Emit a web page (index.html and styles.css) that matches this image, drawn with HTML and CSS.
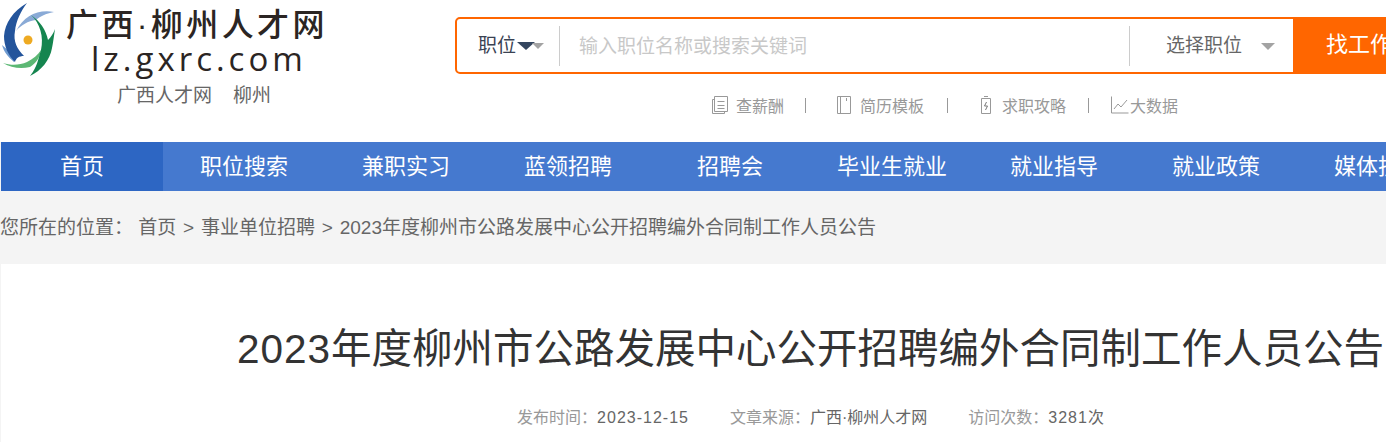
FILE: index.html
```html
<!DOCTYPE html>
<html lang="zh-CN">
<head>
  <meta charset="UTF-8">
  <title>2023年度柳州市公路发展中心公开招聘编外合同制工作人员公告</title>
  <link rel="stylesheet" href="styles.css">
</head>
<body>
  <div class="page">
    <header class="top">
      <div class="logo-box">
        <div class="logo">
          <svg class="logo-mark" width="56" height="76" viewBox="0 0 56 76">
            <path d="M2 44c2 7 6 12 12 17l3-7c-6-3-11-6-15-10z" fill="#6f9bd0"/>
            <path d="M16 30C24 15 38 8 54 11 45 13 41 15 36 19 28 20 21 24 16 30z" fill="#8aaad6"/>
            <path d="M27 2C13 10 5 22 4 35c0 10 4 19 11 26 1-4 4-6 9-6-7-7-11-15-9-25 1-10 6-20 12-28z" fill="#23549b"/>
            <path d="M3 62c9 3 17 2 24-1 6-3 11-7 14-12-1 8-5 13-11 17-9 2-19 1-27-4z" fill="#5cb874"/>
            <path d="M31 14c9 8 13 22 10 35-3 10-4 17-11 26 11-5 20-16 22-28 1-5 2-12 3-19-2 5-4 8-7 11-2-10-8-19-17-25z" fill="#15854f"/>
            <circle cx="28" cy="39" r="4.500" fill="#eeaa22"/>
          </svg>
          <div class="logo-words">
            <div class="logo-cn">广西·柳州人才网</div>
            <div class="logo-en">lz.gxrc.com</div>
          </div>
        </div>
        <div class="city"><span>广西人才网</span><span>柳州</span></div>
      </div>

      <div class="search-box">
        <form class="search">
          <div class="search-type">职位<i class="arrow-dark"></i><i class="arrow-gray arrow-small"></i></div>
          <div class="search-input">输入职位名称或搜索关键词</div>
          <div class="search-pick">选择职位<i class="arrow-gray"></i></div>
          <div class="search-btn">找工作</div>
        </form>
        <div class="tools">
          <a class="tool tool-pay">
            <svg width="18" height="18" viewBox="0 0 18 18" fill="none" stroke="#999"><path d="M3.500 3.500h-2v14h12v-2M3.500 .5h13v15h-13zM6.500 5.500h7M6.500 9.500h7M6.500 12.500h7"/></svg>
            查薪酬
          </a>
          <i class="tool-line"></i>
          <a class="tool tool-cv">
            <svg width="16" height="18" viewBox="0 0 16 18" fill="none" stroke="#999"><path d="M1.500 .5h13v17h-13zM4.500 .5v17M10.500 2v3"/></svg>
            简历模板
          </a>
          <i class="tool-line"></i>
          <a class="tool tool-guide">
            <svg width="12" height="18" viewBox="0 0 12 18" fill="none" stroke="#999"><path d="M1.500 2.500h9v15h-9zM4 .5h4"/><path d="M6.500 6l-2 4h3l-2 4" stroke="#777"/></svg>
            求职攻略
          </a>
          <i class="tool-line"></i>
          <a class="tool tool-data">
            <svg width="18" height="18" viewBox="0 0 18 18" fill="none" stroke="#999"><path d="M.5 .5v16.500h17M3 13l4-5 3 3 6-7"/></svg>
            大数据
          </a>
        </div>
      </div>
    </header>

    <nav class="nav">
      <a class="on">首页</a>
      <a>职位搜索</a>
      <a>兼职实习</a>
      <a>蓝领招聘</a>
      <a>招聘会</a>
      <a>毕业生就业</a>
      <a>就业指导</a>
      <a>就业政策</a>
      <a>媒体技术</a>
    </nav>

    <div class="crumb">
      <span class="crumb-label">您所在的位置：</span>
      <a>首页</a><b>&gt;</b><a>事业单位招聘</a><b>&gt;</b><a>2023年度柳州市公路发展中心公开招聘编外合同制工作人员公告</a>
    </div>

    <section class="article">
      <h1><span class="num">2023</span>年度柳州市公路发展中心公开招聘编外合同制工作人员公告</h1>
      <div class="meta">
        <span><em>发布时间：</em><span class="num">2023-12-15</span></span>
        <span><em>文章来源：</em>广西·柳州人才网</span>
        <span><em>访问次数：</em><span class="num">3281</span>次</span>
      </div>
    </section>
  </div>
</body>
</html>
```

FILE: styles.css
```css
html, body { margin: 0; padding: 0; height: 442px; overflow: hidden; background: #f4f4f4; }
body { font-family: "Liberation Sans", "Noto Sans CJK SC", sans-serif; color: #666; }
.page { width: 1620px; }

.top { display: flex; height: 142px; background: #fff; }
.logo-box { width: 455px; flex: none; }
.logo { display: flex; height: 82px; }
.logo-mark { flex: none; margin-top: 1px; }
.logo-words { margin-left: 10px; color: #2b2523; }
.logo-cn { font-size: 32px; line-height: 36px; font-weight: 500; letter-spacing: 3.400px; margin-top: 7px; white-space: nowrap; }
.logo-en { font-size: 33px; line-height: 32px; letter-spacing: 4px; margin-left: 25px; font-family: "Open Sans", sans-serif; }
.city { font-size: 19px; line-height: 26px; margin: 1px 0 0 117px; display: flex; gap: 21px; }

.search-box { flex: none; width: 1100px; padding-top: 17px; }
.search { display: flex; align-items: center; height: 57px; width: 940px; box-sizing: border-box; border: 2px solid #f60; border-radius: 5px; font-size: 19px; }
.search-type { width: 103px; height: 40px; line-height: 40px; box-sizing: border-box; padding: 1px 0 0 21px; color: #3a4252; border-right: 1px solid #ccc; display: flex; align-items: center; flex: none; }
.search-input { flex: 1; padding-left: 19px; height: 40px; line-height: 41px; color: #c8c8c8; }
.search-pick { width: 164px; height: 40px; line-height: 40px; box-sizing: border-box; padding: 1px 0 0 36px; color: #666; border-left: 1px solid #ccc; display: flex; align-items: center; flex: none; }
.search-btn { width: 102px; height: 57px; line-height: 55px; background: #f60; color: #fff; padding-left: 33px; box-sizing: border-box; margin-right: -2px; font-size: 22px; white-space: nowrap; flex: none; }
.arrow-dark, .arrow-gray { display: inline-block; width: 0; height: 0; border-style: solid; border-color: transparent; border-width: 7px 7px 0; }
.arrow-dark { border-width: 8px 9px 0; border-top-color: #34465f; margin-left: 1px; }
.arrow-gray { border-top-color: #a3a3a3; margin-left: 19px; }
.arrow-gray.arrow-small { border-width: 6px 6px 0; margin-left: -3px; }

.tools { display: flex; align-items: center; height: 30px; margin-top: 16px; padding-left: 256px; font-size: 16px; color: #999; }
.tool { display: flex; align-items: center; white-space: nowrap; }
.tool svg { flex: none; }
.tool-line { width: 1px; height: 15px; background: #999; }
.tool-pay svg { margin-right: 7px; }
.tool-cv svg { margin-right: 8px; }
.tool-guide svg { margin-right: 10px; }
.tool-data svg { margin-right: 1px; }
.tool-pay + .tool-line { margin: 0 30px 0 21px; }
.tool-cv + .tool-line { margin: 0 32px 0 23px; }
.tool-guide + .tool-line { margin: 0 22px 0 22px; }

.nav { display: flex; height: 49px; margin-left: 1px; background: #4579cf; }
.nav a { flex: none; width: 162px; line-height: 49px; text-align: center; color: #fff; font-size: 22px; }
.nav a.on { background: #2d66c3; }

.crumb { height: 73px; line-height: 74px; font-size: 19px; color: #666; white-space: nowrap; }
.crumb b { font-weight: normal; margin: 0 6.800px; }

.article { margin-left: 1px; background: #fff; text-align: center; height: 300px; }
.article h1 { margin: 0; padding-top: 60px; font-size: 40.500px; line-height: 50px; font-weight: normal; color: #333; white-space: nowrap; }
.article h1 .num { letter-spacing: 1px; }
.meta { display: flex; justify-content: center; gap: 41px; margin-top: 32px; font-size: 16px; line-height: 24px; color: #666; }
.meta em { font-style: normal; color: #999; }
.meta .num { letter-spacing: 1px; }
```
